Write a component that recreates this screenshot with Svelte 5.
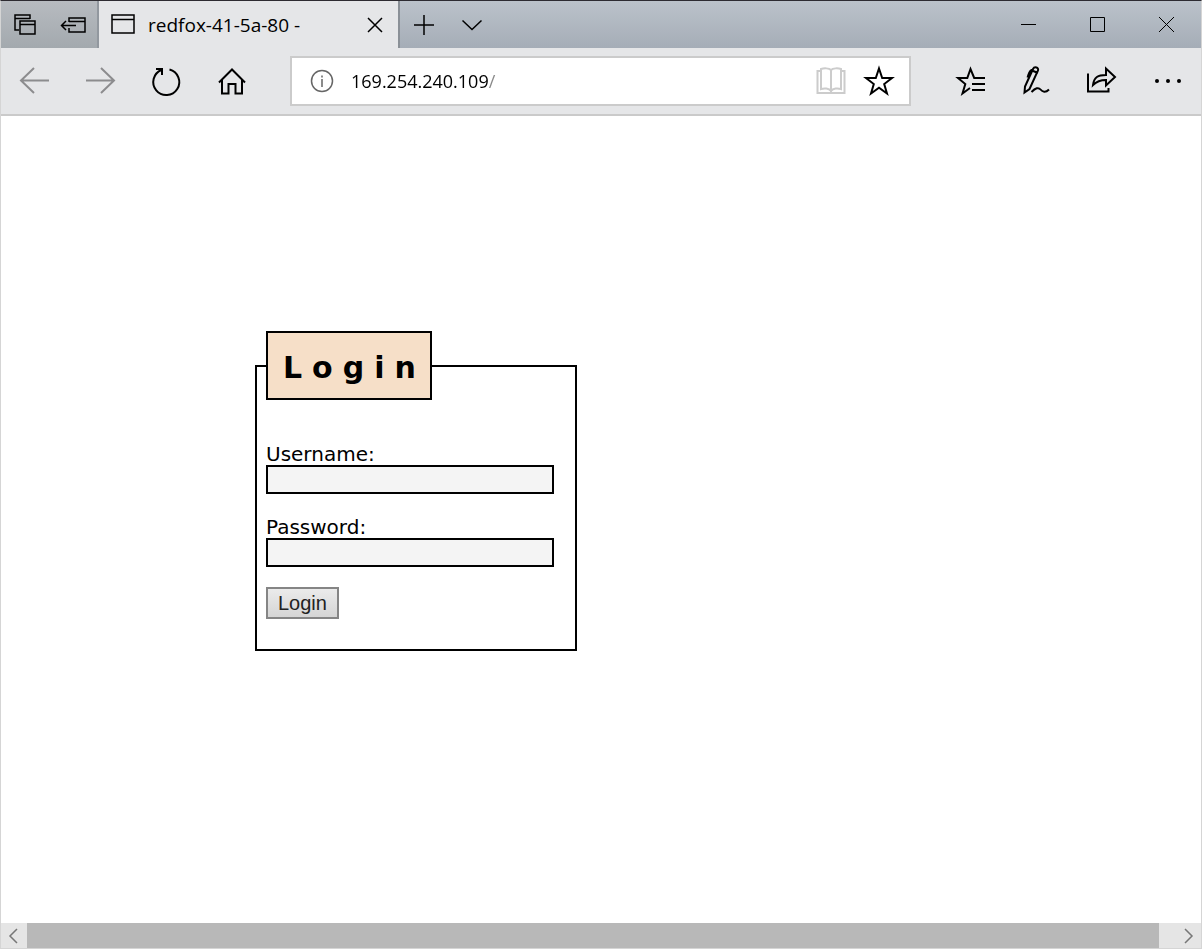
<script lang="ts">
	let address = $state('169.254.240.109/');
	let username = $state('');
	let password = $state('');

	function submit(event: SubmitEvent) {
		event.preventDefault();
	}
</script>

<div class="window">
	<header class="tabs">
		<div class="tabs__tools">
			<button type="button" aria-label="Tabs you've set aside">
				<svg width="24" height="24" viewBox="0 0 24 24">
					<path d="M6 17H2V2h15v4M2 5.500h15M7 8h15v13H7zM7 11.500h15" />
				</svg>
			</button>
			<button type="button" aria-label="Set these tabs aside">
				<svg width="26" height="24" viewBox="0 0 26 24">
					<path d="M9 9V5h16v14H9v-4M9 8.500h16M1.500 12.500H16M6 8l-4.500 4.500L6 17" />
				</svg>
			</button>
		</div>

		<div class="tab">
			<svg width="26" height="24" viewBox="0 0 26 24">
				<path d="M2 2h22v18H2zM2 6.500h22" />
			</svg>
			<span class="tab__title">redfox-41-5a-80 -</span>
			<button type="button" class="tab__close" aria-label="Close tab">
				<svg width="16" height="16" viewBox="0 0 16 16">
					<path d="M1 1l14 14M15 1L1 15" />
				</svg>
			</button>
		</div>

		<div class="tabs__actions">
			<button type="button" aria-label="New tab">
				<svg width="22" height="22" viewBox="0 0 22 22">
					<path d="M11 1v20M1 11h20" />
				</svg>
			</button>
			<button type="button" aria-label="Show tab previews">
				<svg width="22" height="22" viewBox="0 0 22 22">
					<path d="M1.500 6.500l9.500 9 9.500-9" />
				</svg>
			</button>
		</div>

		<div class="controls">
			<button type="button" aria-label="Minimize">
				<svg width="15" height="15" viewBox="0 0 15 15"><path d="M0 7.500h15" /></svg>
			</button>
			<button type="button" aria-label="Maximize">
				<svg width="15" height="15" viewBox="0 0 15 15"><path d="M.5.5h14v14H.5z" /></svg>
			</button>
			<button type="button" aria-label="Close">
				<svg width="15" height="15" viewBox="0 0 15 15"><path d="M0 0l15 15M15 0L0 15" /></svg>
			</button>
		</div>
	</header>

	<nav class="toolbar">
		<button type="button" class="tool" aria-label="Back" disabled>
			<svg width="32" height="32" viewBox="0 0 32 32">
				<path d="M31 15.500H3M16 3L3 15.500 16 28" />
			</svg>
		</button>
		<button type="button" class="tool" aria-label="Forward" disabled>
			<svg width="32" height="32" viewBox="0 0 32 32">
				<path d="M2 15.500h28M17 3l13 12.500L17 28" />
			</svg>
		</button>
		<button type="button" class="tool" aria-label="Refresh">
			<svg width="32" height="32" viewBox="0 0 32 32">
				<path d="M19.500 4.500A13 13 0 1 1 11.500 5M6 4h6v6" />
			</svg>
		</button>
		<button type="button" class="tool" aria-label="Home">
			<svg width="32" height="32" viewBox="0 0 32 32">
				<path d="M3 17.500L16 4.500l13 13M6 15v13.500h6.500V19h7v9.500H26V15" />
			</svg>
		</button>

		<div class="address">
			<svg class="address__info" width="24" height="24" viewBox="0 0 24 24">
				<circle cx="12" cy="12" r="10.500" />
				<path d="M12 10v8M12 6.500v2" />
			</svg>
			<input type="text" aria-label="Address" spellcheck="false" bind:value={address} />
			<button type="button" class="address__reading" aria-label="Reading view" disabled>
				<svg width="32" height="32" viewBox="0 0 32 32">
					<path
						d="M16 5v22M16 5c-2-2-7-2-10-1v20c3-1 8-1 10 2 2-3 7-3 10-2V4c-3-1-8-1-10 1M6 6H2.500v22h27V6H26"
					/>
				</svg>
			</button>
			<button type="button" aria-label="Add to favorites">
				<svg width="32" height="32" viewBox="0 0 32 32">
					<path d="M16 3.500l3.200 9.500h9.800l-7.800 6 2.800 9.500-8-5.700-8 5.700L10.800 19 3 13h9.800z" />
				</svg>
			</button>
		</div>

		<button type="button" class="tool" aria-label="Favorites">
			<svg width="32" height="32" viewBox="0 0 32 32">
				<path
					d="M31 13H20.200L16.500 4l-3.200 9H4l7.300 6-2.800 9.500 7.500-5.500M18 19h13M18 25h13"
				/>
			</svg>
		</button>
		<button type="button" class="tool tool--pen" aria-label="Add notes">
			<svg width="32" height="32" viewBox="0 0 32 32">
				<path
					d="M4.500 27.500l.5-6L13 4c1.500-3 6-1.500 5 1.500L9.500 24zM12 5.500l6 2.500M13 4.500c-4 .5-4 4-5.500 8M11.500 27c4-4 7-5 9-2.500s5 3.500 8.500 0"
				/>
			</svg>
		</button>
		<button type="button" class="tool" aria-label="Share">
			<svg width="32" height="32" viewBox="0 0 32 32">
				<path d="M2 8.500v18h20.500V23M7 20c1-8 5-10 13-10V3.500l9 8.500-9 8.500V15c-6 0-9 1-13 5z" />
			</svg>
		</button>
		<button type="button" class="tool tool--more" aria-label="Settings and more">
			<svg width="32" height="32" viewBox="0 0 32 32">
				<circle cx="5" cy="16" r="2" />
				<circle cx="16" cy="16" r="2" />
				<circle cx="27" cy="16" r="2" />
			</svg>
		</button>
	</nav>

	<main class="page">
		<form onsubmit={submit}>
			<fieldset>
				<legend>Login</legend>
				<label for="username">Username:</label>
				<input id="username" type="text" bind:value={username} />
				<label for="password">Password:</label>
				<input id="password" type="password" bind:value={password} />
				<button type="submit">Login</button>
			</fieldset>
		</form>
	</main>

	<div class="scrollbar">
		<button type="button" aria-label="Scroll left">
			<svg width="16" height="16" viewBox="0 0 16 16"><path d="M11 1L4 8l7 7" /></svg>
		</button>
		<div class="scrollbar__thumb"></div>
		<button type="button" aria-label="Scroll right">
			<svg width="16" height="16" viewBox="0 0 16 16"><path d="M5 1l7 7-7 7" /></svg>
		</button>
	</div>
</div>

<style>
	:global(body) {
		margin: 0;
	}

	.window {
		box-sizing: border-box;
		display: flex;
		flex-direction: column;
		min-height: 100vh;
		border: 1px solid #d5d5d5;
		border-top-color: #2d2b31;
		background: #fff;
		color: #000;
		font-family: 'Open Sans', 'Noto Sans', sans-serif;
		font-size: 18px;
	}

	svg {
		display: block;
		flex: none;
		fill: none;
		stroke: currentColor;
		stroke-width: 2;
	}

	.tabs button,
	.toolbar button,
	.scrollbar button {
		display: flex;
		align-items: center;
		justify-content: center;
		border: 0;
		background: none;
		color: inherit;
		padding: 0;
	}

	.tabs {
		display: flex;
		height: 47px;
		background: linear-gradient(#bbc2ca, #a5adb7);
	}

	.tabs svg {
		stroke-width: 1.5;
	}

	.tabs__tools {
		box-sizing: border-box;
		display: flex;
		width: 98px;
		border-right: 2px solid #92989f;
		background: linear-gradient(#b7bbc0, #a3a9ae);
	}

	.tabs__tools button {
		width: 48px;
	}

	.tab {
		box-sizing: border-box;
		display: flex;
		align-items: center;
		width: 301px;
		border-right: 2px solid #8a9097;
		background: #e5e6e8;
		padding: 0 15px 0 11px;
	}

	.tab__title {
		flex: 1;
		margin-left: 12px;
		font-size: 19px;
		line-height: 24px;
		white-space: nowrap;
	}

	.tabs__actions {
		display: flex;
	}

	.tabs__actions button {
		width: 48px;
	}

	.controls {
		display: flex;
		margin-left: auto;
	}

	.controls button {
		width: 69px;
	}

	.controls svg {
		stroke-width: 1;
	}

	.toolbar {
		display: flex;
		align-items: center;
		height: 66px;
		border-bottom: 2px solid #cacaca;
		background: #e5e6e8;
	}

	.toolbar .tool {
		width: 66px;
		height: 66px;
	}

	.toolbar .tool:disabled {
		color: #8c8c8e;
	}

	.tool--more circle {
		fill: currentColor;
		stroke: none;
	}

	.address {
		box-sizing: border-box;
		display: flex;
		flex: 1;
		align-items: center;
		min-width: 0;
		height: 50px;
		margin: 0 26px 0 25px;
		border: 2px solid #cbcbcb;
		background: #fff;
		padding: 0 6px 0 18px;
	}

	.address__info {
		color: #666;
		stroke-width: 1.5;
	}

	/* the host is black, the path after it is grey */
	.address input {
		flex: 1;
		min-width: 0;
		margin-left: 17px;
		border: 0;
		background: linear-gradient(90deg, #000 138px, #888 138px);
		background-clip: text;
		color: transparent;
		caret-color: #000;
		padding: 0;
		font: inherit;
		outline: 0;
	}

	.address button {
		width: 48px;
		height: 46px;
	}

	.toolbar .address__reading {
		color: #ccc;
	}

	.page {
		flex: 1;
		padding: 215px 24px 24px 254px;
		font-family: Verdana, 'DejaVu Sans', sans-serif;
		font-size: 20px;
	}

	fieldset {
		box-sizing: border-box;
		display: block;
		width: 322px;
		margin: 0;
		border: 2px solid #000;
		padding: 42px 9px 30px;
	}

	legend {
		border: 2px solid #000;
		background: #f6dfc8;
		padding: 17px 4px 13px 15px;
		font-size: 30px;
		font-weight: bold;
		letter-spacing: 10px;
		line-height: 35px;
	}

	label {
		display: block;
		line-height: 24px;
	}

	fieldset input {
		box-sizing: border-box;
		display: block;
		width: 288px;
		height: 29px;
		margin: -1px 0 21px;
		border: 2px solid #000;
		background: #f4f4f4;
		padding: 0 4px;
		font: inherit;
	}

	fieldset button {
		display: block;
		height: 32px;
		margin-top: -1px;
		border: 2px solid #858585;
		background: linear-gradient(#ebebeb, #d5d5d5);
		color: #222;
		padding: 0 10px;
		font-family: Arial, 'Liberation Sans', sans-serif;
		font-size: 20px;
	}

	.scrollbar {
		display: flex;
		height: 25px;
		background: #e5e5e5;
	}

	.scrollbar button {
		width: 26px;
		color: #777;
	}

	.scrollbar svg {
		stroke-width: 1.5;
	}

	.scrollbar__thumb {
		flex: 1;
		margin-right: 16px;
		background: #b8b8b8;
	}
</style>
